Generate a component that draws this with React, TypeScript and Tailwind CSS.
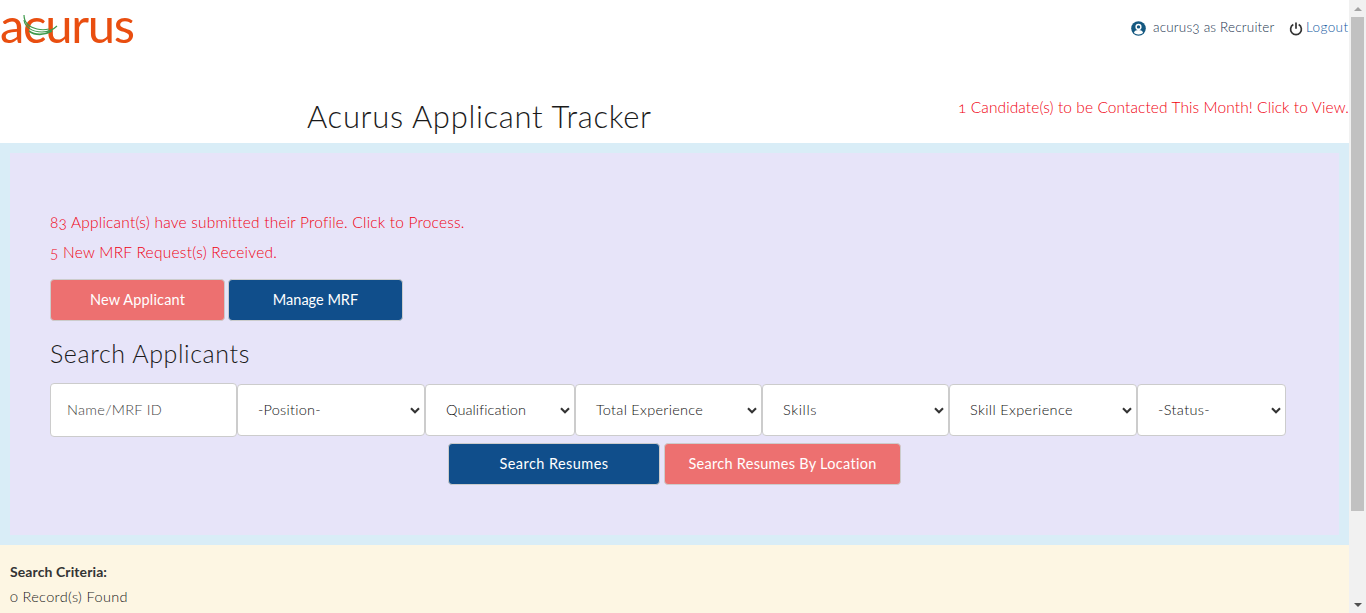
import type { ReactNode } from "react";

function Chevron() {
  return (
    <svg width="10" height="7" viewBox="0 0 10 7" className="shrink-0" fill="none" stroke="#333" strokeWidth="2.1">
      <path d="M1 1.2 5 5.2 9 1.2" />
    </svg>
  );
}

function SelectBox({ label, className }: { label: string; className: string }) {
  return (
    <button
      type="button"
      className={`flex h-[52px] shrink-0 items-center justify-between rounded border border-[#ccc] bg-white pr-1 pl-5 text-[14.5px] whitespace-nowrap text-[#111] ${className}`}
    >
      <span>{label}</span>
      <Chevron />
    </button>
  );
}

function ActionButton({ children, className }: { children: ReactNode; className: string }) {
  return (
    <button
      type="button"
      className={`flex h-[42px] shrink-0 items-center justify-center rounded border border-[#ccc] text-[14.5px] whitespace-nowrap text-white ${className}`}
    >
      {children}
    </button>
  );
}

function Logo() {
  return (
    <div className="relative h-[60px] w-[150px]">
      <div className="h-[60px] text-[49px] leading-[48px] font-normal tracking-[-1.3px] whitespace-nowrap text-[#e94e10]">
        acurus
      </div>
      <svg className="absolute top-[14px] left-[22px]" width="38" height="24" viewBox="0 0 38 24" fill="none" stroke="#3f9a4c">
        <path d="M2 1c0 7 5 12 13 14 4 1 8 1 12 0" strokeWidth="1.2" />
        <path d="M2 6c1 7 8 12 18 12 7 0 11-2 15-6" strokeWidth="1.2" />
        <path d="M7 17c6 4.500 15 4.500 23 0" strokeWidth="1.7" />
      </svg>
    </div>
  );
}

function Scrollbar() {
  return (
    <div className="flex h-full w-[17px] shrink-0 flex-col items-center bg-[#f1f1f1]">
      <div className="flex h-[17px] items-center justify-center">
        <svg width="8" height="4" viewBox="0 0 8 4" fill="#a3a3a3"><path d="M4 0 8 4H0z" /></svg>
      </div>
      <div className="h-[494px] w-[13px] bg-[#c1c1c1]" />
      <div className="mt-auto flex h-[17px] items-center justify-center">
        <svg width="8" height="4" viewBox="0 0 8 4" fill="#505050"><path d="M0 0h8L4 4z" /></svg>
      </div>
    </div>
  );
}

export default function App() {
  return (
    <div className="flex h-[613px] w-[1366px] overflow-hidden bg-white font-['Lato','Open_Sans',sans-serif] font-light text-[#1a1a1a] oldstyle-nums">
      <div className="flex w-[1349px] shrink-0 flex-col overflow-hidden">
        <header className="flex h-[143px] shrink-0 flex-col">
          <div className="flex h-[60px] justify-between">
            <Logo />
            <div className="flex h-[54px] items-center text-[13.5px] whitespace-nowrap">
              <svg className="mt-0.5 mr-[7px]" width="15" height="15" viewBox="0 0 15 15">
                <circle cx="7.5" cy="7.5" r="7.3" fill="#145880" />
                <path d="M3 12.1C3 9.900 4.800 9 7.500 9s4.500.9 4.500 3.100A6.500 6.500 0 0 1 7.500 13.500 6.500 6.500 0 0 1 3 12.100z" fill="#fff" />
                <circle cx="7.5" cy="5.9" r="3.100" fill="#fff" />
                <circle cx="7.5" cy="5.9" r="1.700" fill="#145880" />
              </svg>
              <span className="w-[137px] tracking-[0.18px] text-[#1c3550]">acurus3 as Recruiter</span>
              <svg className="mt-[3px] mr-[3px] -ml-px" width="14" height="14" viewBox="0 0 14 14" fill="none" stroke="#333" strokeWidth="1.7">
                <path d="M4.3 2.6a5.400 5.400 0 1 0 5.400 0" />
                <path d="M7 .5v6.2" />
              </svg>
              <span className="w-[43px] tracking-[0.4px] text-[#0f57a0]">Logout</span>
            </div>
          </div>
          <div className="flex justify-between pl-[307px] whitespace-nowrap">
            <h1 className="mt-10 text-[31px] leading-[33px] tracking-[0.69px]">Acurus Applicant Tracker</h1>
            <p className="mt-[37px] w-[391px] text-[15.5px] leading-5 tracking-[0.09px] text-[#f00010]">
              1 Candidate(s) to be Contacted This Month! Click to View.
            </p>
          </div>
        </header>

        <main className="h-[402px] shrink-0 bg-[#d9edf7] p-2.5">
          <section className="flex h-[382px] flex-col bg-[#e7e4f9] px-10 pt-[54px]">
            <p className="h-[30px] text-[15.5px] leading-[30px] tracking-[0.2px] whitespace-nowrap text-[#f00010]">
              83 Applicant(s) have submitted their Profile. Click to Process.
            </p>
            <p className="h-[30px] text-[15.5px] leading-[30px] tracking-[0.25px] whitespace-nowrap text-[#f00010]">
              5 New MRF Request(s) Received.
            </p>
            <div className="mt-3 flex gap-[3px]">
              <ActionButton className="w-[175px] bg-[#ed7070] font-normal tracking-[0.15px]">New Applicant</ActionButton>
              <ActionButton className="w-[175px] bg-[#104e8b] font-normal tracking-[0px]">Manage MRF</ActionButton>
            </div>
            <h2 className="mt-[19px] h-[43px] text-[25px] leading-[26px] tracking-[0.6px]">Search Applicants</h2>
            <div className="flex items-center">
              <input
                type="text"
                placeholder="Name/MRF ID"
                className="h-[54px] w-[187px] shrink-0 rounded border border-[#ccc] bg-white px-4 pb-0.5 text-[14.5px] tracking-[0.3px] outline-none placeholder:text-[#444]"
              />
              <SelectBox label="-Position-" className="w-[188px] tracking-[0.24px]" />
              <SelectBox label="Qualification" className="w-[150px] tracking-[0.08px]" />
              <SelectBox label="Total Experience" className="w-[187px] tracking-[0.28px]" />
              <SelectBox label="Skills" className="w-[187px] tracking-[0.62px]" />
              <SelectBox label="Skill Experience" className="w-[188px] tracking-[0.37px]" />
              <SelectBox label="-Status-" className="w-[149px] tracking-[0.36px]" />
            </div>
            <div className="mt-1.5 flex gap-1 pl-[398px]">
              <ActionButton className="w-[212px] bg-[#104e8b] font-normal tracking-[0.44px]">Search Resumes</ActionButton>
              <ActionButton className="w-[237px] bg-[#ed7070] font-normal tracking-[0.28px]">Search Resumes By Location</ActionButton>
            </div>
          </section>
        </main>

        <footer className="flex-1 bg-[#fdf6e3] px-2.5 pt-[14px] text-sm leading-[25px]">
          <p className="font-bold tracking-[0.1px] text-[#333]">Search Criteria:</p>
          <p className="text-[14.5px] tracking-[0.36px]">0 Record(s) Found</p>
        </footer>
      </div>
      <Scrollbar />
    </div>
  );
}
